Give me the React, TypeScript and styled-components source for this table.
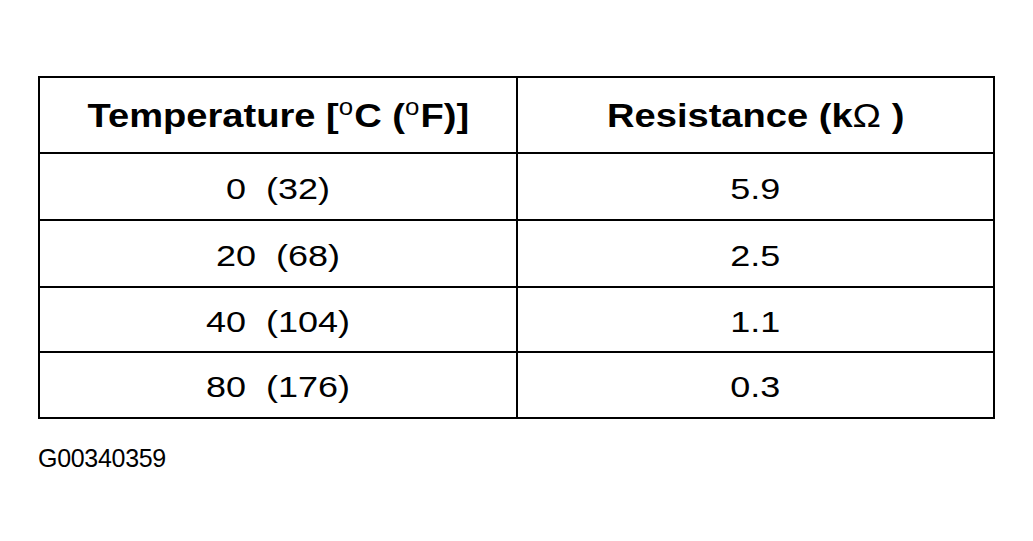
import React from "react";
import styled, { createGlobalStyle } from "styled-components";

const Global = createGlobalStyle`
  html, body { margin: 0; padding: 0; background: #fff; }
  body { font-family: "Liberation Sans", Arial, sans-serif; color: #000; }
`;

const Page = styled.div`
  width: 1033px;
  height: 541px;
  padding: 76px 0 0 38px;
  box-sizing: border-box;
  background: #fff;
`;

const Table = styled.div`
  width: 957px;
  box-sizing: border-box;
  border: 2px solid #000;
  display: flex;
  flex-direction: column;
`;

const Row = styled.div<{ $h: number; $last?: boolean }>`
  display: grid;
  grid-template-columns: 476px 475px;
  column-gap: 2px;
  background: #000;
  height: ${(p) => p.$h}px;
  border-bottom: ${(p) => (p.$last ? "none" : "2px solid #000")};
`;

const Cell = styled.div<{ $head?: boolean }>`
  background: #fff;
  display: flex;
  align-items: center;
  justify-content: center;
  white-space: pre;
  font-size: ${(p) => (p.$head ? 34 : 29)}px;
  font-weight: ${(p) => (p.$head ? 700 : 400)};
  padding-top: ${(p) => (p.$head ? 0 : 5)}px;
`;

const Text = styled.span<{ $sx: number }>`
  display: inline-block;
  transform: scaleX(${(p) => p.$sx});
`;

const Deg = styled.span`
  font-size: 0.68em;
  font-weight: 400;
  position: relative;
  top: -0.5em;
  margin-right: 1px;
`;

const Omega = styled.span`
  font-weight: 400;
`;

const Caption = styled.div`
  margin-top: 25px;
  font-size: 25px;
  letter-spacing: -0.3px;
`;

const rows = [
  { t: "0  (32)", r: "5.9", h: 65 },
  { t: "20  (68)", r: "2.5", h: 65 },
  { t: "40  (104)", r: "1.1", h: 63 },
  { t: "80  (176)", r: "0.3", h: 64 },
];

export default function App() {
  return (
    <Page>
      <Global />
      <Table>
        <Row $h={74}>
          <Cell $head>
            <Text $sx={1.12}>
              Temperature [<Deg>o</Deg>C (<Deg>o</Deg>F)]
            </Text>
          </Cell>
          <Cell $head>
            <Text $sx={1.12}>
              Resistance (k<Omega>Ω</Omega> )
            </Text>
          </Cell>
        </Row>
        {rows.map((row, i) => (
          <Row key={row.t} $h={row.h} $last={i === rows.length - 1}>
            <Cell>
              <Text $sx={1.24}>{row.t}</Text>
            </Cell>
            <Cell>
              <Text $sx={1.24}>{row.r}</Text>
            </Cell>
          </Row>
        ))}
      </Table>
      <Caption>G00340359</Caption>
    </Page>
  );
}
